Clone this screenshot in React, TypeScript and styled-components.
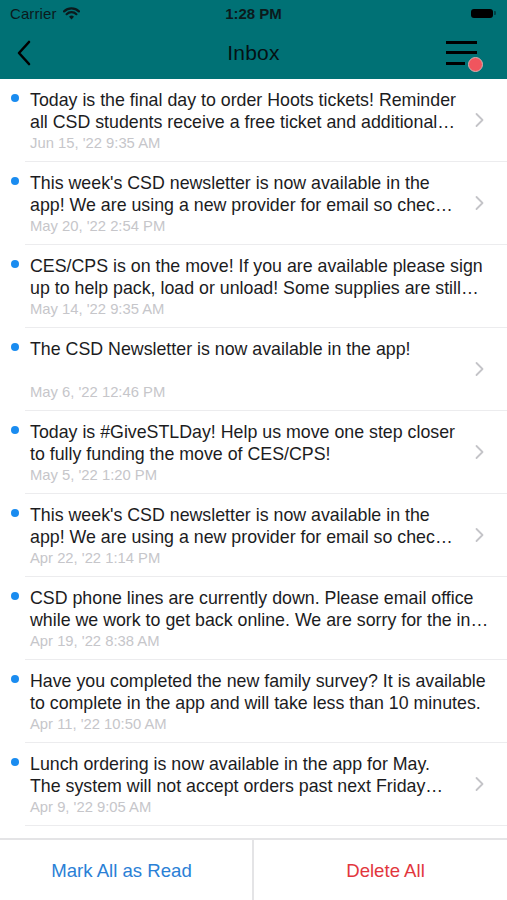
import React from 'react';
import styled, { createGlobalStyle } from 'styled-components';

const GlobalStyle = createGlobalStyle`
  html, body {
    margin: 0;
    padding: 0;
    background: #ffffff;
  }
  body {
    font-family: 'Liberation Sans', Arial, Helvetica, sans-serif;
  }
`;

interface Message {
  lines: string[];
  date: string;
}

// lines are kept as the app shows them (two lines, truncated)
const messages: Message[] = [
  {
    lines: ['Today is the final day to order Hoots tickets! Reminder', 'all CSD students receive a free ticket and additional…'],
    date: "Jun 15, '22 9:35 AM",
  },
  {
    lines: ["This week's CSD newsletter is now available in the", 'app! We are using a new provider for email so chec…'],
    date: "May 20, '22 2:54 PM",
  },
  {
    lines: ['CES/CPS is on the move! If you are available please sign', 'up to help pack, load or unload! Some supplies are still…'],
    date: "May 14, '22 9:35 AM",
  },
  {
    lines: ['The CSD Newsletter is now available in the app!'],
    date: "May 6, '22 12:46 PM",
  },
  {
    lines: ['Today is #GiveSTLDay! Help us move one step closer', 'to fully funding the move of CES/CPS!'],
    date: "May 5, '22 1:20 PM",
  },
  {
    lines: ["This week's CSD newsletter is now available in the", 'app! We are using a new provider for email  so chec…'],
    date: "Apr 22, '22 1:14 PM",
  },
  {
    lines: ['CSD phone lines are currently down. Please email office', 'while we work to get back online. We are sorry for the in…'],
    date: "Apr 19, '22 8:38 AM",
  },
  {
    lines: ['Have you completed the new family survey? It is available', 'to complete in the app and will take less than 10 minutes.'],
    date: "Apr 11, '22 10:50 AM",
  },
  {
    lines: ['Lunch ordering is now available in the app for May.', 'The system will not accept orders past next Friday…'],
    date: "Apr 9, '22 9:05 AM",
  },
];

const Screen = styled.div`
  width: 507px;
  height: 900px;
  display: flex;
  flex-direction: column;
  overflow: hidden;
  background: #ffffff;
`;

const Header = styled.div`
  background: #007175;
  height: 79px;
  display: flex;
  flex-direction: column;
  flex-shrink: 0;
`;

const StatusBar = styled.div`
  height: 26px;
  display: grid;
  grid-template-columns: 1fr auto 1fr;
  align-items: center;
  padding: 0 10px;
  font-size: 15px;
  color: #0b1a1c;
`;

const Carrier = styled.div`
  display: flex;
  align-items: center;
  gap: 6px;
  letter-spacing: 0.1px;
`;

const Clock = styled.div`
  font-weight: 700;
  font-size: 15px;
`;

const Battery = styled.div`
  justify-self: end;
  display: flex;
  align-items: center;
  gap: 1px;
  margin-right: 1px;
`;

const BatteryBody = styled.div`
  width: 22px;
  height: 9px;
  border-radius: 3px;
  background: #000;
`;

const BatteryNub = styled.div`
  width: 2px;
  height: 4px;
  border-radius: 0 1px 1px 0;
  background: rgba(0, 0, 0, 0.4);
`;

const NavBar = styled.div`
  flex: 1;
  display: grid;
  grid-template-columns: 60px 1fr 60px;
  align-items: center;
`;

const BackButton = styled.div`
  display: flex;
  align-items: center;
  padding-left: 16px;
`;

const Title = styled.div`
  text-align: center;
  font-size: 21px;
  color: #051214;
  letter-spacing: 0.2px;
`;

const MenuButton = styled.div`
  position: relative;
  justify-self: end;
  margin-right: 30px;
  width: 31px;
  height: 24px;
  display: flex;
  flex-direction: column;
  justify-content: space-between;
`;

const MenuLine = styled.div<{ $short?: boolean }>`
  height: 3px;
  width: ${p => (p.$short ? '19px' : '31px')};
  background: #000;
`;

const Badge = styled.div`
  position: absolute;
  right: -6px;
  bottom: -7px;
  width: 13px;
  height: 13px;
  border-radius: 50%;
  background: #f0555e;
  border: 1.5px solid #d8b0b0;
`;

const List = styled.div`
  flex: 1;
  overflow: hidden;
`;

const Row = styled.div`
  display: flex;
  align-items: stretch;
  height: 83px;
  padding-left: 11px;
  box-sizing: border-box;
`;

const DotCol = styled.div`
  width: 19px;
  flex-shrink: 0;
  padding-top: 15px;
`;

const Dot = styled.div`
  width: 8px;
  height: 8px;
  border-radius: 50%;
  background: #1a8cf0;
`;

const RowBody = styled.div`
  flex: 1;
  display: flex;
  align-items: center;
  border-bottom: 1.5px solid #ececee;
  margin-left: -5px;
  padding-left: 5px;
  position: relative;
`;

const TextCol = styled.div`
  flex: 1;
  min-width: 0;
  display: flex;
  flex-direction: column;
  align-self: stretch;
  padding-top: 10px;
`;

const MessageText = styled.div`
  height: 44px;
`;

const MessageLine = styled.div`
  position: relative;
  z-index: 1;
  width: fit-content;
  padding-right: 7px;
  background: #ffffff;
  font-size: 17.8px;
  line-height: 22px;
  color: #1c1c1e;
  white-space: nowrap;
`;

const DateText = styled.div`
  font-size: 14.8px;
  color: #c6c6ca;
  margin-top: 1px;
  line-height: 18px;
`;

const Chevron = styled.div`
  position: absolute;
  right: 23px;
  top: 50%;
  transform: translateY(-50%);
  display: flex;
`;

const Footer = styled.div`
  flex-shrink: 0;
  height: 60px;
  border-top: 2px solid #e4e4e6;
  display: grid;
  grid-template-columns: 254px 1fr;
`;

const FooterButton = styled.div<{ $color: string; $divider?: boolean; $shift: number }>`
  display: flex;
  align-items: center;
  justify-content: center;
  font-size: 18.6px;
  padding-top: 1px;
  padding-left: ${p => (p.$shift > 0 ? p.$shift : 0)}px;
  padding-right: ${p => (p.$shift < 0 ? -p.$shift : 0)}px;
  color: ${p => p.$color};
  border-right: ${p => (p.$divider ? '2px solid #e4e4e6' : 'none')};
`;

const WifiIcon = () => (
  <svg width="17" height="13" viewBox="0 0 17 13">
    <path d="M8.5 12.5 L6 9.7 A3.6 3.6 0 0 1 11 9.7 Z" fill="#0b1a1c" />
    <path d="M3.6 7.2 A7 7 0 0 1 13.4 7.2" stroke="#0b1a1c" strokeWidth="2.2" fill="none" strokeLinecap="round" />
    <path d="M1.1 4.4 A10.6 10.6 0 0 1 15.9 4.4" stroke="#0b1a1c" strokeWidth="2.2" fill="none" strokeLinecap="round" />
  </svg>
);

const BackIcon = () => (
  <svg width="16" height="26" viewBox="0 0 16 26">
    <path d="M13 2 L3 13 L13 24" stroke="#000" strokeWidth="2.6" fill="none" strokeLinecap="round" strokeLinejoin="round" />
  </svg>
);

const ChevronIcon = () => (
  <svg width="9" height="15" viewBox="0 0 9 15">
    <path d="M1.5 1.5 L7.5 7.5 L1.5 13.5" stroke="#c4c4c8" strokeWidth="1.8" fill="none" strokeLinecap="round" strokeLinejoin="round" />
  </svg>
);

const MessageRow: React.FC<{ message: Message }> = ({ message }) => (
  <Row>
    <DotCol>
      <Dot />
    </DotCol>
    <RowBody>
      <Chevron>
        <ChevronIcon />
      </Chevron>
      <TextCol>
        <MessageText>
          {message.lines.map((line, i) => (
            <MessageLine key={i}>{line}</MessageLine>
          ))}
        </MessageText>
        <DateText>{message.date}</DateText>
      </TextCol>
    </RowBody>
  </Row>
);

export default function App() {
  return (
    <>
      <GlobalStyle />
      <Screen>
        <Header>
          <StatusBar>
            <Carrier>
              Carrier
              <WifiIcon />
            </Carrier>
            <Clock>1:28 PM</Clock>
            <Battery>
              <BatteryBody />
              <BatteryNub />
            </Battery>
          </StatusBar>
          <NavBar>
            <BackButton>
              <BackIcon />
            </BackButton>
            <Title>Inbox</Title>
            <MenuButton>
              <MenuLine />
              <MenuLine />
              <MenuLine $short />
              <Badge />
            </MenuButton>
          </NavBar>
        </Header>
        <List>
          {messages.map((m, i) => (
            <MessageRow key={i} message={m} />
          ))}
        </List>
        <Footer>
          <FooterButton $color="#2a80d6" $divider $shift={-9}>
            Mark All as Read
          </FooterButton>
          <FooterButton $color="#e2363d" $shift={10}>
            Delete All
          </FooterButton>
        </Footer>
      </Screen>
    </>
  );
}
